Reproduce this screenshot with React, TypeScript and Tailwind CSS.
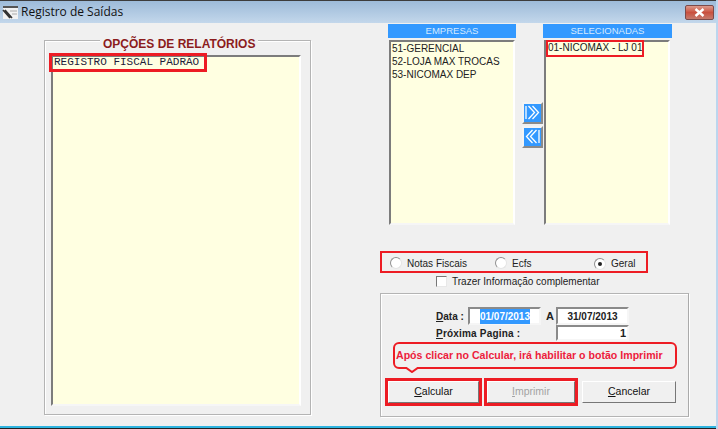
const sans = 'font-["Liberation_Sans",Arial,sans-serif]'

// ─── Small controls ───────────────────────────────────────────────────────────

function Radio({ label, checked, className }: { label: string; checked?: boolean; className: string }) {
  return (
    <div className={`flex items-center gap-[5px] ${className}`}>
      <span className="flex h-[12px] w-[12px] items-center justify-center rounded-full border border-[#8f8f8f] border-r-[#e4e4e4] border-b-[#e4e4e4] bg-white">
        {checked && <span className="h-[4px] w-[4px] rounded-full bg-[#222]" />}
      </span>
      <span>{label}</span>
    </div>
  )
}

function ListBox({ className, children }: { className: string; children?: React.ReactNode }) {
  return (
    <div className={`border-2 border-[#7c7c7c] border-r-white border-b-[#f6f6f6] bg-[#ffffe1] ${className}`}>
      {children}
    </div>
  )
}

function ArrowButton({ left }: { left?: boolean }) {
  return (
    <div className="h-[22px] w-[21px] border-2 border-[#f4f4f4] border-r-[#8a8a8a] border-b-[#8a8a8a] bg-[#3399ff]">
      <svg width="17" height="18" viewBox="0 0 17 18" fill="none" stroke="#fff" strokeWidth="1.3">
        <g transform={left ? 'translate(17 0) scale(-1 1)' : undefined}>
          <path d="M2 2v13" />
          <path d="M4.5 2l6 6.5-6 6.5" />
          <path d="M8.5 2l6 6.5-6 6.5" />
        </g>
      </svg>
    </div>
  )
}

function Button({ children, disabled, marked, className }: { children: React.ReactNode; disabled?: boolean; marked?: boolean; className: string }) {
  return (
    <div className={`${marked ? 'border-[3px] border-[#ed1c24]' : 'p-[3px]'} ${className} h-[28px] shrink-0`}>
      <div
        className={`flex h-full items-center justify-center border border-white border-r-[#777] border-b-[#777] bg-[#f0f0f0] text-[10.5px] ${
          disabled ? 'text-[#a3a3a3]' : 'text-[#111]'
        }`}
      >
        {children}
      </div>
    </div>
  )
}

function DateField({ value, selected }: { value: string; selected?: boolean }) {
  return (
    <div
      className={`flex h-[18px] w-[73px] items-center border-2 border-[#8a8a8a] border-r-[#f6f6f6] border-b-[#f6f6f6] bg-white text-[10px] font-bold text-[#222] ${
        selected ? 'justify-end pr-[9px]' : 'justify-center'
      }`}
    >
      {selected ? <span className="bg-[#3399ff] text-white">{value}</span> : value}
    </div>
  )
}

// ─── Page ─────────────────────────────────────────────────────────────────────

export default function App() {
  return (
    <div className={`flex h-[429px] w-[718px] flex-col overflow-hidden border-r-2 border-r-[#bcd6ee] bg-[#f0f0f0] ${sans}`}>
      {/* Title bar */}
      <div className="flex h-[23px] shrink-0 items-center border-t border-t-[#3c3c3c] bg-gradient-to-b from-[#9dbbd9] to-[#c3d7eb] pl-[2px] pr-[2px]">
        <svg width="16" height="16" viewBox="0 0 16 16" className="shrink-0">
          <rect x="1" y="2" width="15" height="13" fill="#f2f2f2" />
          <path d="M1 3h15" stroke="#555" strokeWidth="2" />
          <path d="M1 6l7 8M3 6l7 8" stroke="#333" strokeWidth="1.6" />
          <path d="M8 7h7M10 10h5" stroke="#aaa" />
        </svg>
        <span className="ml-[3px] font-['Open_Sans',sans-serif] text-[12px] text-[#111]">Registro de Saídas</span>
        <div className="ml-auto flex h-[15px] w-[29px] items-center justify-center rounded-[2px] border border-[#7b4a4a] bg-gradient-to-b from-[#dc9a8c] via-[#c9503f] to-[#c4796c]">
          <svg width="11" height="9" viewBox="0 0 11 9" fill="none" stroke="#fff" strokeWidth="2.4">
            <path d="M1.5 1l8 7M9.5 1l-8 7" />
          </svg>
        </div>
      </div>

      <div className="flex min-h-0 flex-1 pl-[44px]">
        {/* Report options */}
        <div className="relative mt-[17px] h-[375px] w-[267px] shrink-0 border border-[#b4b4b4] pl-[6px] pr-[9px] pt-[14px] shadow-[inset_1px_1px_0_#fff,1px_1px_0_#fff]">
          <span className="absolute -top-[4px] left-[55px] bg-[#f0f0f0] px-[3px] text-[12px] font-bold leading-[15px] text-[#8c1c1c]">
            OPÇÕES DE RELATÓRIOS
          </span>
          <ListBox className="relative h-[351px] w-[250px]">
            <div className="absolute -left-[4px] -top-[4px] flex h-[19px] w-[158px] items-center border-[3px] border-[#ed1c24] pl-[2px] font-['Liberation_Mono',monospace] text-[11px] text-[#1c1c3a]">
              REGISTRO FISCAL PADRÃO
            </div>
          </ListBox>
        </div>

        {/* Right side */}
        <div className="ml-[69px] flex w-[309px] flex-col pb-[9px]">
          {/* Company pickers */}
          <div className="ml-[8px] flex h-[202px] items-start pt-[1px] text-[10px] text-[#222]">
            <div className="w-[128px]">
              <div className="h-[14px] bg-[#3399ff] text-center text-[9.5px] leading-[14px] text-[#d3e9ff]">EMPRESAS</div>
              <ListBox className="ml-[1px] mt-[2px] h-[185px] w-[126px] pl-[1px] leading-[13px]">
                <div>51-GERENCIAL</div>
                <div>52-LOJA MAX TROCAS</div>
                <div>53-NICOMAX DEP</div>
              </ListBox>
            </div>
            <div className="ml-[6px] mt-[78px] flex w-[21px] flex-col gap-[2px]">
              <ArrowButton />
              <ArrowButton left />
            </div>
            <div className="w-[129px]">
              <div className="h-[14px] bg-[#3399ff] text-center text-[9.5px] leading-[14px] text-[#d3e9ff]">SELECIONADAS</div>
              <ListBox className="relative ml-[1px] mt-[2px] h-[185px] w-[126px]">
                <div className="absolute left-0 -top-[2px] h-[17px] w-[98px] overflow-hidden border-2 border-[#ed1c24] leading-[11px] whitespace-nowrap">
                  01-NICOMAX - LJ 01
                </div>
              </ListBox>
            </div>
          </div>

          {/* Report type */}
          <div className="mt-[26px] flex h-[22px] w-[268px] items-center border-2 border-[#ed1c24] pl-[8px] pt-[2px] text-[10px] text-[#222]">
            <Radio label="Notas Fiscais" className="w-[105px]" />
            <Radio label="Ecfs" className="w-[99px]" />
            <Radio label="Geral" checked className="mt-[1px]" />
          </div>
          <div className="ml-[56px] mt-[2px] flex h-[13px] items-center gap-[5px] text-[10px] text-[#222]">
            <span className="h-[11px] w-[11px] border border-[#777] border-r-[#e8e8e8] border-b-[#e8e8e8] bg-white" />
            Trazer Informação complementar
          </div>

          {/* Dates and actions */}
          <div className="mt-[5px] flex h-[124px] w-[309px] flex-col border border-[#b4b4b4] border-r-[#aaa] pl-[4px] pt-[13px] shadow-[inset_1px_1px_0_#fff,1px_1px_0_#fff]">
            <div className="flex h-[18px] items-center text-[10px] font-bold text-[#222]">
              <span className="ml-[51px] w-[32px]"><u>D</u>ata :</span>
              <DateField value="01/07/2013" selected />
              <span className="ml-[5px] w-[10px] text-[11px]">A</span>
              <DateField value="31/07/2013" />
            </div>
            <div className="flex h-[16px] items-center text-[10px] font-bold text-[#222]">
              <span className="ml-[51px] w-[120px] tracking-[0.2px]"><u>P</u>róxima Pagina :</span>
              <div className="h-[16px] w-[73px] border-2 border-[#8a8a8a] border-r-[#f6f6f6] border-b-[#f6f6f6] bg-white pr-[1px] text-right text-[11px] leading-[13px]">1</div>
            </div>
            <div className="relative ml-[8px] mt-[1px] flex h-[27px] w-[284px] items-center rounded-[6px] border-2 border-[#ed1c24] pl-[1px] text-[10.6px] font-bold whitespace-nowrap text-[#ed1c3c]">
              Após clicar no Calcular, irá habilitar o botão Imprimir
              <svg width="14" height="6" viewBox="0 0 14 6" className="absolute -bottom-[6px] left-[10px]">
                <path d="M0 0l7 5 7-5" fill="#f0f0f0" stroke="#ed1c24" strokeWidth="2" />
              </svg>
            </div>
            <div className="mt-[9px] flex">
              <Button marked className="w-[97px]"><span><u>C</u>alcular</span></Button>
              <Button marked disabled className="ml-[2px] w-[94px]"><span><u>I</u>mprimir</span></Button>
              <Button className="ml-[1px] w-[100px]"><span><u>C</u>ancelar</span></Button>
            </div>
          </div>
        </div>
      </div>

      {/* Window bottom edge */}
      <div className="h-[3px] shrink-0 border-t-2 border-t-[#2fb4e0] bg-[#222]" />
    </div>
  )
}
